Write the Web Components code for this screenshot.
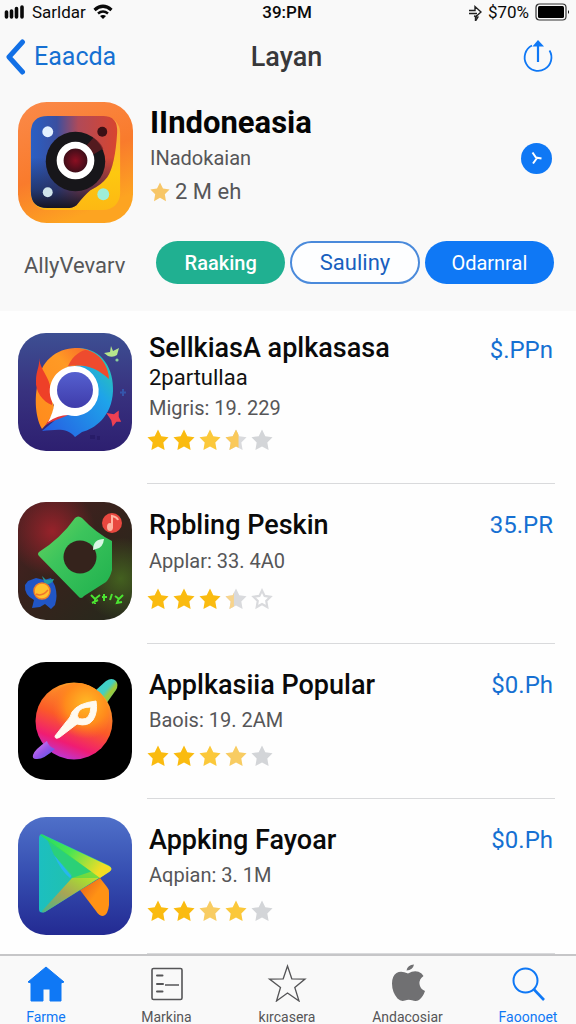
<!DOCTYPE html>
<html lang="id">
<head>
<meta charset="utf-8">
<meta name="viewport" content="width=device-width, initial-scale=1">
<title>Layan</title>
<style>
  html, body { margin: 0; }
  body {
    font-family: Roboto, "Liberation Sans", sans-serif;
    color: #0a0a0a;
    background: #fefefe;
    --blue: #0f78f5;
    --ink-blue: #1670d2;
    --gray: #565658;
    --bar: #f9f9f9;
  }
</style>
</head>
<body>
<store-page>
  <status-bar slot="top" carrier="Sarldar" time="39:PM" battery="$70%"></status-bar>
  <nav-bar slot="top" back="Eaacda">Layan</nav-bar>
  <app-hero slot="top">
    <span slot="name">IIndoneasia</span>
    <span slot="maker">INadokaian</span>
    <span slot="score">2 M eh</span>
  </app-hero>
  <filter-row slot="top" label="AllyVevarv">
    <pill-button kind="green">Raaking</pill-button>
    <pill-button kind="outline">Sauliny</pill-button>
    <pill-button kind="blue">Odarnral</pill-button>
  </filter-row>

  <app-row long icon="chat" price="$.PPn" stars="f f l h e">
    <span slot="name">SellkiasA aplkasasa</span>
    <span slot="sub">2partullaa</span>
    <span slot="meta">Migris: 19. 229</span>
  </app-row>
  <app-row roomy icon="gem" price="35.PR" stars="f f f q o">
    <span slot="name">Rpbling Peskin</span>
    <span slot="meta">Applar: 33. 4A0</span>
  </app-row>
  <app-row icon="planet" price="$0.Ph" stars="f f l p e">
    <span slot="name">Applkasiia Popular</span>
    <span slot="meta">Baois: 19. 2AM</span>
  </app-row>
  <app-row icon="play" price="$0.Ph" stars="f f p l e">
    <span slot="name">Appking Fayoar</span>
    <span slot="meta">Aqpian: 3. 1M</span>
  </app-row>

  <tab-bar slot="bottom">
    <tab-item icon="home" active>Farme</tab-item>
    <tab-item icon="list">Markina</tab-item>
    <tab-item icon="star">kırcasera</tab-item>
    <tab-item icon="apple">Andacosiar</tab-item>
    <tab-item icon="search" active>Faoonoet</tab-item>
  </tab-bar>
</store-page>

<script>
const STAR = 'M12 0.500 L15.600 7.800 L23.500 9 L17.800 14.600 L19.200 23 L12 19 L4.800 23 L6.200 14.600 L0.500 9 L8.400 7.800 Z';

const ART = {
  hero: `<svg viewBox="0 0 116 122" aria-hidden="true">
    <defs>
      <linearGradient id="o" x1="0" y1="0" x2=".4" y2="1"><stop offset="0" stop-color="#fb8a4a"/><stop offset=".6" stop-color="#f97b2c"/><stop offset="1" stop-color="#fda421"/></linearGradient>
      <linearGradient id="y" x1="0" y1="0" x2="0" y2="1"><stop offset="0" stop-color="#f9a24a"/><stop offset=".6" stop-color="#fdc810"/><stop offset="1" stop-color="#fdb813"/></linearGradient>
      <linearGradient id="b" x1="0" y1="0" x2="1" y2="0"><stop offset="0" stop-color="#2a5fc4"/><stop offset=".3" stop-color="#3a4fa0"/><stop offset=".55" stop-color="#b04a58"/><stop offset="1" stop-color="#d8452f"/></linearGradient>
      <linearGradient id="d" x1="0" y1="0" x2="0" y2="1"><stop offset=".45" stop-color="#1a1c3c" stop-opacity="0"/><stop offset=".8" stop-color="#1b2040" stop-opacity=".6"/><stop offset="1" stop-color="#16141f"/></linearGradient>
      <radialGradient id="r"><stop offset="0" stop-color="#8c0f22"/><stop offset="1" stop-color="#2a0d16"/></radialGradient>
    </defs>
    <rect width="116" height="122" rx="29" fill="url(#o)"/>
    <rect x="13" y="14" width="90" height="95" rx="17" fill="url(#y)"/>
    <path d="M30 14 H86 Q101 14 100 31 Q98 64 90 76 Q84 84 73 89 Q67 94 59 104 Q55 107 49 107 H30 Q13 107 13 90 V31 Q13 14 30 14Z" fill="url(#b)"/>
    <path d="M30 14 H86 Q101 14 100 31 Q98 64 90 76 Q84 84 73 89 Q67 94 59 104 Q55 107 49 107 H30 Q13 107 13 90 V31 Q13 14 30 14Z" fill="url(#d)"/>
    <circle cx="58" cy="60" r="30" fill="#17161a"/>
    <path d="M68 45 L76 36 Q83 40 86 47 L76 53Z" fill="#6d1c22" opacity=".7"/>
    <circle cx="58" cy="59" r="15.5" fill="url(#r)" stroke="#fff" stroke-width="7"/>
    <circle cx="30" cy="30" r="5.5" fill="#e3f1ff"/><circle cx="85" cy="30" r="5" fill="#3b1015"/>
    <circle cx="30" cy="91" r="5" fill="#cfe4ea"/><circle cx="86" cy="93" r="6" fill="#9eeed8"/>
  </svg>`,
  chat: `<svg viewBox="0 0 114 118" aria-hidden="true">
    <defs>
      <linearGradient id="bg" x1="0" y1="0" x2="0" y2="1"><stop offset="0" stop-color="#3d4f93"/><stop offset=".5" stop-color="#38327f"/><stop offset="1" stop-color="#2d1f70"/></linearGradient>
      <linearGradient id="or" x1="1" y1="0" x2="0" y2="1"><stop offset="0" stop-color="#f4512a"/><stop offset=".4" stop-color="#ff9a25"/><stop offset="1" stop-color="#ff8a1c"/></linearGradient>
      <linearGradient id="bl" x1="1" y1="0" x2="0" y2="1"><stop offset="0" stop-color="#2fd29c"/><stop offset=".35" stop-color="#1ea3ea"/><stop offset="1" stop-color="#2759e2"/></linearGradient>
      <linearGradient id="in" x1="0" y1="0" x2="0" y2="1"><stop offset="0" stop-color="#5560cf"/><stop offset="1" stop-color="#3f3cab"/></linearGradient>
    </defs>
    <rect width="114" height="118" rx="28" fill="url(#bg)"/>
    <path d="M56 15 C84 13 96 36 95 58 C94 84 76 96 64 99 L57 104 C49 94 38 97 24 98 L36 88 L60 60Z" fill="url(#bl)"/>
    <path d="M24 96 C16 82 17 60 20 50 C22 29 38 15 58 15 C74 15 88 25 91 44 C80 34 66 30 50 34 C36 40 33 58 36 74 C35 84 28 92 24 96Z" fill="url(#or)"/>
    <path d="M50 33 C55 22 64 17 68 17 C82 20 90 32 91 46 C80 36 68 30 50 33Z" fill="#ee4b2e"/>
    <path d="M21 25 C23 41 35 43 34 72 C25 69 17 58 18 48 C18 37 22 34 21 25Z" fill="#ee4028"/>
    <path d="M27 93 L32 85 Q42 80 50 82 C42 86 32 88 27 93Z" fill="#e2373c"/>
    <path d="M57 33 a24 25 0 1 1 -7 49 Q40 82 30 89 Q35 80 36 72 A25 25 0 0 1 57 33Z" fill="#fff"/>
    <circle cx="57" cy="57" r="18" fill="url(#in)"/>
    <path d="M86 20 L92 19 L93 13 L95 18 L101 15 L99 22 Q95 25 90 23Z" fill="#b6e58c"/>
    <circle cx="99" cy="27" r="1.6" fill="#8ccf9c"/>
    <path d="M90 81 L96 82 L100 79 L100 84 L102 88 L98 88 L95 92 L94 87Z" fill="#ee4052" stroke="#ee4052" stroke-width="1.500"/>
    <path d="M105 56 V63 M102 59.500 H108" stroke="#3555ab" stroke-width="2"/>
    <path d="M72 104 H77 M79 105 H82" stroke="#281c68" stroke-width="4"/>
  </svg>`,
  gem: `<svg viewBox="0 0 114 118" aria-hidden="true">
    <defs>
      <linearGradient id="bg" x1="0" y1="0" x2="1" y2="1"><stop offset="0" stop-color="#4b2022"/><stop offset=".5" stop-color="#35231c"/><stop offset="1" stop-color="#252a1c"/></linearGradient>
      <radialGradient id="rd" cx=".3" cy=".25" r=".38"><stop offset="0" stop-color="#97222a"/><stop offset="1" stop-color="#97222a" stop-opacity="0"/></radialGradient>
      <radialGradient id="gr" cx=".9" cy=".65" r=".35"><stop offset="0" stop-color="#43601f"/><stop offset="1" stop-color="#43601f" stop-opacity="0"/></radialGradient>
      <linearGradient id="g" x1="0" y1="0" x2="1" y2="1"><stop offset="0" stop-color="#6bd45e"/><stop offset=".4" stop-color="#3cc45c"/><stop offset="1" stop-color="#1fb04d"/></linearGradient>
    </defs>
    <rect width="114" height="118" rx="28" fill="url(#bg)"/>
    <rect width="114" height="118" rx="28" fill="url(#rd)"/><rect width="114" height="118" rx="28" fill="url(#gr)"/>
    <path d="M57 16 Q60 13 64 16 Q78 31 94 39 V68 Q92 76 88 80 L66 94 Q63 98 60 94 L21 54 Q19 52 21 50 Q43 36 57 16Z" fill="url(#g)"/>
    <circle cx="62" cy="55" r="16.500" fill="#35231c"/>
    <path d="M75 48 Q75 37 86 37 Q85 46 78 47Z" fill="#d9f7e4"/>
    <circle cx="94" cy="21" r="10" fill="#e8483f"/>
    <path d="M94 26 V14 Q99 15 100 18" fill="none" stroke="#ffb5a2" stroke-width="2"/><ellipse cx="92" cy="25" rx="3" ry="4" fill="#ffb5a2"/>
    <path d="M10 79 L18 76 L26 78 L33 76 L37 84 Q40 94 37 103 L33 107 L27 102 L22 105 L14 106 L16 98 Q6 93 7 83Z" fill="#2156c6"/>
    <path d="M24 74 L28 78 L36 77 Q34 83 27 82Z" fill="#239a9e"/>
    <circle cx="24" cy="89" r="8" fill="#ffc22e" stroke="#ef7e2b" stroke-width="1.500"/><path d="M18 92 Q24 95 30 88" stroke="#f0752f" stroke-width="1.500" fill="none"/>
    <path d="M73 93 L77 97 L82 93 M77 96 V102 M74 101 L80 98 M84 95 H89 M86 92 V99 M92 98 L94 92 M97 94 L101 97 L105 93 M101 96 L99 101 L104 100" stroke="#4be531" stroke-width="2" fill="none"/>
  </svg>`,
  planet: `<svg viewBox="0 0 114 118" aria-hidden="true">
    <defs>
      <linearGradient id="p" x1=".7" y1="0" x2=".3" y2="1"><stop offset="0" stop-color="#fdb128"/><stop offset=".5" stop-color="#fb5a28"/><stop offset=".78" stop-color="#f01c72"/><stop offset="1" stop-color="#b53ae2"/></linearGradient>
      <radialGradient id="q" cx=".65" cy=".32" r=".55"><stop offset="0" stop-color="#ffba25"/><stop offset=".6" stop-color="#ff8b1c"/><stop offset="1" stop-color="#ff6a26" stop-opacity="0"/></radialGradient>
      <linearGradient id="t" x1="0" y1="0" x2="1" y2="1"><stop offset="0" stop-color="#35d2d6"/><stop offset=".45" stop-color="#45cfc0"/><stop offset=".6" stop-color="#a3ca35"/><stop offset="1" stop-color="#32c9b0"/></linearGradient>
      <linearGradient id="v" x1="0" y1="0" x2="1" y2="1"><stop offset="0" stop-color="#e38af0"/><stop offset=".5" stop-color="#9a55e8"/><stop offset="1" stop-color="#4657e8"/></linearGradient>
    </defs>
    <rect width="114" height="118" rx="28" fill="#000"/>
    <path d="M78 28 L88 19 Q94 15 98 19 Q101 23 98 28 L88 42Z" fill="url(#t)"/>
    <circle cx="56" cy="59" r="38.500" fill="url(#p)"/><circle cx="59" cy="53" r="32" fill="url(#q)"/>
    <path d="M15 93 Q16 88 29 79 Q30 84 37 87 Q25 98 18 97 Q14 97 15 93Z" fill="url(#v)"/>
    <path fill-rule="evenodd" d="M78 39 Q80 50 75 58 Q70 65 59 62 L42 75 Q37 78 37 74 L48 60 Q53 55 54 50 Q60 41 78 39Z M73 45 Q62 45 60 51 Q58 57 64 57 Q72 58 73 45Z" fill="#fffaf0" stroke="#fffaf0" stroke-width="1"/>
  </svg>`,
  play: `<svg viewBox="0 0 114 118" aria-hidden="true">
    <defs>
      <linearGradient id="bg" x1="0" y1="0" x2="0" y2="1"><stop offset="0" stop-color="#4f70c9"/><stop offset=".5" stop-color="#354db0"/><stop offset="1" stop-color="#232a92"/></linearGradient>
      <linearGradient id="te" x1="0" y1="0" x2="1" y2="0"><stop offset="0" stop-color="#1cbfc0"/><stop offset="1" stop-color="#26c39a"/></linearGradient>
      <linearGradient id="gn" x1="0" y1="0" x2="1" y2=".5"><stop offset="0" stop-color="#22d96a"/><stop offset=".5" stop-color="#4be552"/><stop offset="1" stop-color="#f3dd25"/></linearGradient>
      <linearGradient id="ol" x1="0" y1="1" x2="1" y2="0"><stop offset="0" stop-color="#4bb487"/><stop offset=".4" stop-color="#a7a556"/><stop offset=".7" stop-color="#a8d934"/><stop offset="1" stop-color="#f6dc28"/></linearGradient>
      <linearGradient id="of" x1="0" y1="0" x2="1" y2="1"><stop offset="0" stop-color="#e35c20"/><stop offset=".5" stop-color="#ff9214"/></linearGradient>
    </defs>
    <rect width="114" height="118" rx="28" fill="url(#bg)"/>
    <path d="M62 73 L82 61 L89 70 Q91 72 91 76 V88 Q90 98 85 99 Q81 99 78 94Z" fill="url(#of)"/>
    <path d="M21 21 Q21 16 26 18 L90 48 Q96 51 91 55 L27 95 Q21 97 21 92Z" fill="url(#te)"/>
    <path d="M54 61 L75 54 L92 54 L27 95 Q23 96 24 94Z" fill="url(#ol)"/>
    <path d="M22 18 Q24 16 27 19 L91 49 Q96 52 91 55 L82 61Z" fill="url(#gn)"/>
    <path d="M36 38 L54 58 L52 61 Q43 54 36 38Z" fill="#26b7ef"/>
    <path d="M29 22 L82 61 L55 61 L36 38Z" fill="#35dc4b" opacity=".55"/>
  </svg>`
};

const TAB_ART = {
  home: `<path d="M20 3 L38 18 L35 19 V37 H24 V25 H17 V37 H5 V19 L2 18Z" fill="currentColor" stroke="currentColor" stroke-width="1" stroke-linejoin="round"/>`,
  list: `<rect x="5" y="4.500" width="30" height="31" rx="1.500" fill="none" stroke="currentColor" stroke-width="1.600"/><path d="M10 11.500 H15.500 M10 20 H16 M10 27.500 H15.500" stroke="currentColor" stroke-width="2" stroke-linecap="round"/><path d="M18 21 H32" stroke="currentColor" stroke-width="1.500"/>`,
  star: `<path d="M20.500 2 L24.800 14.800 L38 15 L27.800 23.500 L32 37 L20.500 29 L9.500 37 L13.500 23.500 L2.500 15 L16.200 14.800Z" fill="none" stroke="currentColor" stroke-width="1.300"/>`,
  apple: `<path d="M18.500 6.500 Q19.500 1 26 .5 Q25 6 18.500 6.500Z M20 9.500 Q26 6 30.500 7.800 Q34 9 35.500 12 Q31 15 31.500 20 Q32 25 37 27 Q35 33 31 36 Q28 38 24 36.300 Q20.500 35 17 36.500 Q13 38 9.500 34.500 Q4 28 4 19.500 Q4 12 8.500 9 Q13 6.500 20 9.500Z" fill="#707072"/>`,
  search: `<circle cx="17.500" cy="16.500" r="12" fill="none" stroke="currentColor" stroke-width="2"/><path d="M26 25.500 L36 36" stroke="currentColor" stroke-width="2.600"/>`
};

function define(name, render) {
  customElements.define(name, class extends HTMLElement {
    constructor() { super(); this.attachShadow({ mode: 'open' }); }
    connectedCallback() {
      const t = document.createElement('template');
      t.innerHTML = render(this);
      this.shadowRoot.replaceChildren(t.content.cloneNode(true));
    }
  });
}

define('store-page', () => `
  <style>
    :host { display: flex; flex-direction: column; min-height: 100vh; }
    header { background: var(--bar); padding-bottom: 27px; }
    main { flex: 1; padding-top: 4px; }
    ::slotted(tab-bar) { position: sticky; bottom: 0; }
  </style>
  <header><slot name="top"></slot></header>
  <main><slot></slot></main>
  <slot name="bottom"></slot>`);

define('status-bar', el => `
  <style>
    :host { display: grid; grid-template-columns: 1fr auto 1fr; align-items: center; height: 24px; padding: 0 6px 0 4px; font-size: 17px; line-height: 24px; }
    div { display: flex; align-items: center; gap: 7px; }
    .r { justify-content: flex-end; gap: 6px; }
    b { font-weight: 500; }
    svg { display: block; }
  </style>
  <div>
    <svg width="21" height="14" aria-hidden="true"><path d="M2.500 7 V12 M7.500 6 V12 M12.500 3.500 V12 M18 2 V12" stroke="#0a0a0a" stroke-width="3.600" stroke-linecap="round"/></svg>
    <span>${el.getAttribute('carrier')}</span>
    <svg width="20" height="16" aria-hidden="true"><path d="M1.500 6 Q10 -1.500 18.500 6" fill="none" stroke="#0a0a0a" stroke-width="3.200"/><path d="M5 9.500 Q10 5.500 15 9.500" fill="none" stroke="#0a0a0a" stroke-width="2.600"/><path d="M7 12 Q10 10 13 12 L10 15Z"/></svg>
  </div>
  <b>${el.getAttribute('time')}</b>
  <div class="r">
    <svg width="14" height="18" aria-hidden="true"><path d="M1 7.500 H7 V3.500 L13 9 L8 13.500 M1 10.500 H9 M6 13 L10 14 L7.500 18 V14" fill="none" stroke="#222" stroke-width="1.400"/></svg>
    <span>${el.getAttribute('battery')}</span>
    <svg width="35" height="18" aria-hidden="true"><rect x="1" y="1" width="30" height="16" rx="3.500" fill="none" stroke="#333" stroke-width="1.200"/><rect x="3" y="3" width="26" height="12" rx="1.500"/><path d="M33 7 Q35 9 33 11Z"/></svg>
  </div>`);

define('nav-bar', el => `
  <style>
    :host { display: grid; grid-template-columns: 1fr auto 1fr; align-items: center; height: 66px; padding: 0 22px 0 5px; }
    a { display: flex; align-items: center; gap: 8px; color: var(--ink-blue); text-decoration: none; font-size: 25px; line-height: 32px; }
    h1 { margin: 0; font-size: 27px; line-height: 32px; font-weight: 500; color: #38383a; padding-left: 14px; }
    button { justify-self: end; border: 0; padding: 0; background: none; color: var(--blue); }
    svg { display: block; }
  </style>
  <a href="#back"><svg width="21" height="36" aria-hidden="true"><path d="M17.500 3 L4 18 L17.500 33" fill="none" stroke="#1270e6" stroke-width="5" stroke-linecap="round" stroke-linejoin="round"/></svg>${el.getAttribute('back')}</a>
  <h1><slot></slot></h1>
  <button aria-label="Bagikan"><svg width="32" height="36"><path d="M10 6.500 A13.400 13.400 0 1 0 27.500 11.500" fill="none" stroke="currentColor" stroke-width="1.800"/><path d="M16 23 V5" stroke="currentColor" stroke-width="2.200"/><path d="M10.500 7.500 L16 1 L22 7.500Z" fill="currentColor"/></svg></button>`);

define('app-hero', () => `
  <style>
    :host { display: flex; align-items: flex-start; padding: 12px 24px 0 18px; gap: 17px; }
    .art svg { display: block; width: 115px; height: 121px; }
    .text { flex: 1; min-width: 0; }
    h2 { margin: 0; padding-top: 2px; font-size: 31px; line-height: 38px; font-weight: 700; color: #050505; }
    p { margin: 0; font-size: 20px; line-height: 33px; color: var(--gray); }
    .score { display: flex; align-items: center; gap: 5px; font-size: 22px; }
    button { align-self: center; border: 0; border-radius: 50%; padding: 0; width: 31px; height: 31px; background: var(--blue); margin-top: -8px; }
    svg { display: block; }
  </style>
  <div class="art">${ART.hero}</div>
  <div class="text">
    <h2><slot name="name"></slot></h2>
    <p><slot name="maker"></slot></p>
    <p class="score"><svg width="20" height="20" viewBox="0 0 24 24" aria-hidden="true"><path d="${STAR}" fill="#f7c667"/></svg><slot name="score"></slot></p>
  </div>
  <button aria-label="Buka"><svg width="31" height="31"><path d="M11.500 9.500 L15 14.500 L20.500 15.500 M16 15 L12 20.500" fill="none" stroke="#fff" stroke-width="2"/></svg></button>`);

define('filter-row', el => `
  <style>
    :host { display: flex; align-items: center; padding: 18px 22px 0 18px; }
    .label { flex: none; width: 138px; box-sizing: border-box; padding-left: 6px; font-size: 22px; line-height: 28px; padding-top: 6px; color: var(--gray); }
    .pills { flex: 1; display: grid; grid-template-columns: repeat(3, 1fr); gap: 5px; }
  </style>
  <span class="label">${el.getAttribute('label')}</span>
  <div class="pills"><slot></slot></div>`);

define('pill-button', () => `
  <style>
    :host { display: block; }
    button { display: block; width: 100%; height: 43px; border: 0; border-radius: 22px; padding: 0; font: inherit; font-size: 20px; line-height: 26px; color: #fff; background: var(--blue); }
    :host([kind=green]) button { background: #20b091; font-weight: 500; }
    :host([kind=outline]) button { background: #fdfeff; border: 2px solid #4a8adb; font-size: 22px; color: #185fbe; }
  </style>
  <button><slot></slot></button>`);

const FILLS = { f: '#fabb10', l: '#fbc83a', p: '#f8cc62', e: '#d3d5d8' };
const star = k => {
  let body = `<path d="${STAR}" fill="${FILLS[k] || '#d9dadd'}"/>`;
  if (k === 'h') body += `<path d="${STAR}" fill="#fac95a" style="clip-path: inset(0 38% 0 0)"/>`;
  if (k === 'q') body += `<path d="${STAR}" fill="#f8d48c" style="clip-path: inset(0 60% 0 0)"/>`;
  if (k === 'o') body = `<path d="${STAR}" fill="#fff" stroke="#d9dadd" stroke-width="3" transform="translate(2.400 2.400) scale(.8)"/>`;
  return `<svg width="22" height="22" viewBox="0 0 24 24">${body}</svg>`;
};

define('app-row', el => `
  <style>
    :host { display: flex; padding-left: 18px; padding-right: 21px; }
    .art { padding: 18px 15px 0 0; }
    .art svg { display: block; width: 114px; height: 118px; }
    .body { flex: 1; min-width: 0; display: flex; justify-content: space-between; padding: 24px 2px 24px 0; border-bottom: 1px solid #d9dadc; }
    :host([roomy]) .body { padding-bottom: 25px; }
    :host([long]) .body { padding-top: 18px; padding-bottom: 26px; }
    .text { padding-left: 2px; }
    h2 { margin: 0; font-size: 27px; line-height: 34px; font-weight: 500; color: #0a0a0a; }
    p { margin: 0; font-size: 20px; line-height: 36px; color: var(--gray); }
    .sub { display: none; }
    .stars { display: flex; align-items: center; gap: 4px; height: 36px; margin-left: -2px; }
    .stars svg { display: block; }
    :host([roomy]) p { line-height: 38px; }
    :host([roomy]) .stars { height: 38px; }
    :host([long]) h2, :host([long]) p { line-height: 30px; }
    :host([long]) .sub { display: block; font-size: 22px; color: #111; }
    :host([long]) .stars { height: 34px; }
    a { color: var(--ink-blue); text-decoration: none; font-size: 24px; line-height: 34px; }
  </style>
  <div class="art">${ART[el.getAttribute('icon')]}</div>
  <div class="body">
    <div class="text">
      <h2><slot name="name"></slot></h2>
      <p class="sub"><slot name="sub"></slot></p>
      <p><slot name="meta"></slot></p>
      <div class="stars" role="img" aria-label="Peringkat">${el.getAttribute('stars').split(' ').map(star).join('')}</div>
    </div>
    <a href="#beli">${el.getAttribute('price')}</a>
  </div>`);

define('tab-bar', () => `
  <style>
    :host { display: block; background: var(--bar); border-top: 2px solid #c6c6c8; }
    nav { display: flex; justify-content: space-between; height: 68px; padding: 0 4px 0 2px; overflow: hidden; }
  </style>
  <nav><slot></slot></nav>`);

define('tab-item', el => `
  <style>
    :host { display: block; width: 88px; color: #555557; }
    :host([active]) { color: var(--blue); }
    a { display: flex; flex-direction: column; align-items: center; padding-top: 8px; color: inherit; text-decoration: none; font-size: 14px; line-height: 16px; }
    svg { display: block; margin-bottom: 7px; }
  </style>
  <a href="#${el.getAttribute('icon')}"><svg width="40" height="38" viewBox="0 0 40 38" aria-hidden="true">${TAB_ART[el.getAttribute('icon')]}</svg><slot></slot></a>`);
</script>
</body>
</html>
